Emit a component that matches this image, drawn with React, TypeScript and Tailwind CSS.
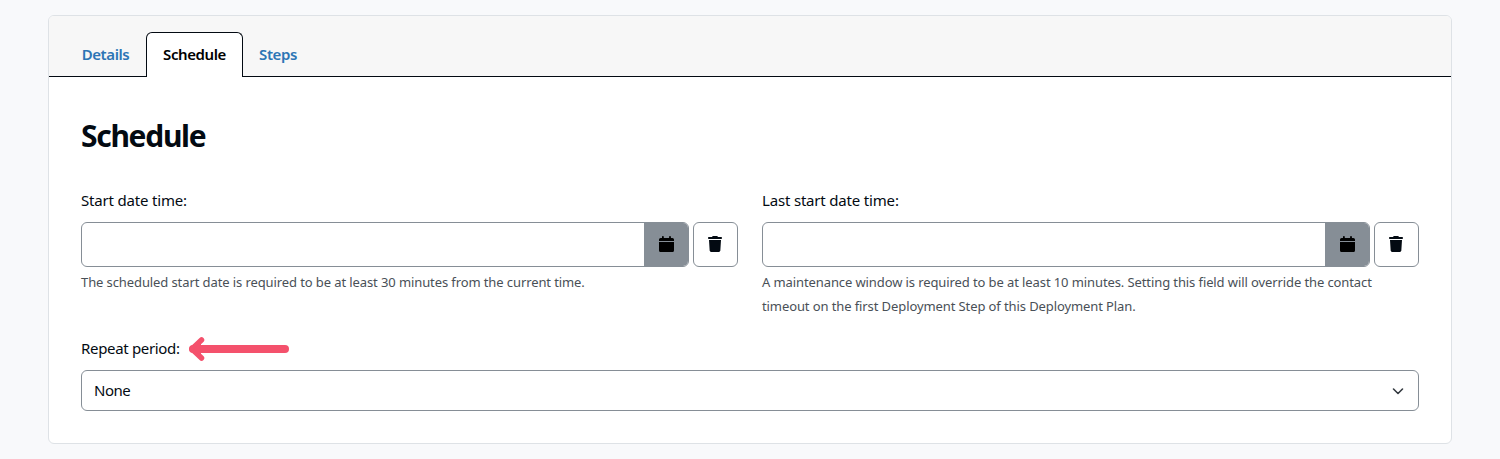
import type { ReactNode } from "react";

function CalendarIcon() {
  return (
    <svg className="h-4 w-[15px]" viewBox="0 0 15 16" fill="#000" aria-hidden="true">
      <path d="M0 5V3.600Q0 2 1.600 2H3V.8Q3 0 3.900 0t.9.8V2h5.300V.8Q10.100 0 11 0t.9.8V2h1.500Q15 2 15 3.600V5ZM0 6h15v8.400q0 1.600-1.600 1.600H1.600Q0 16 0 14.400Z" />
    </svg>
  );
}

function TrashIcon() {
  return (
    <svg className="h-4 w-3.5" viewBox="0 0 448 512" fill="#030a12" aria-hidden="true">
      <path d="M135.200 17.700 128 32H32C14.300 32 0 46.300 0 64s14.300 32 32 32h384c17.700 0 32-14.300 32-32s-14.300-32-32-32h-96l-7.200-14.300C307.400 6.800 296.300 0 284.200 0H163.800c-12.100 0-23.200 6.800-28.600 17.700zM416 128H32l21.200 339c1.600 25.300 22.600 45 47.900 45h245.800c25.300 0 46.300-19.700 47.900-45L416 128z" />
    </svg>
  );
}

function DateField({ label, children }: { label: string; children: ReactNode }) {
  return (
    <div className="min-w-0 flex-1">
      <div className="h-6 text-[15px] leading-6 tracking-[-0.18px]">{label}</div>
      <div className="mt-[10px] flex h-[45px] gap-1">
        <div className="flex flex-1 rounded-md border border-[#868e96] bg-white">
          <div className="flex-1" />
          <button className="flex w-11 items-center justify-center rounded-r-[5px] bg-[#868e96] pb-px" aria-label="Pick a date">
            <CalendarIcon />
          </button>
        </div>
        <button className="flex w-[45px] items-center justify-center rounded-md border border-[#868e96] bg-white pr-0.5 pb-px" aria-label="Clear">
          <TrashIcon />
        </button>
      </div>
      <p className="mt-[3px] text-[13px] leading-6 tracking-[-0.1px] text-[#495057]">{children}</p>
    </div>
  );
}

export default function App() {
  return (
    <div className="h-[459px] bg-[#f8f9fb] px-12 pt-[15px] font-['Noto_Sans',sans-serif] text-[#030a12]">
      <div className="h-[429px] w-[1404px] overflow-hidden rounded-md border border-[#dee2e6] bg-white">
        <div className="flex h-[61px] items-end border-b border-[#030a12] bg-[#f7f7f7] pl-4 text-[15px] font-semibold tracking-[-0.4px] text-[#2c75b5]">
          <div className="flex h-[44px] w-[81px] items-center justify-center">Details</div>
          <div className="-mb-px flex h-[45px] w-[97px] items-center justify-center rounded-t-md border border-b-0 border-[#030a12] bg-white pb-px text-black">
            Schedule
          </div>
          <div className="flex h-[44px] w-[70px] items-center justify-center">Steps</div>
        </div>
        <div className="px-8 pt-[39px]">
          <h1 className="h-10 text-[30px] leading-10 font-bold tracking-[-1.3px]">Schedule</h1>
          <div className="mt-8 flex gap-6">
            <DateField label="Start date time:">
              The scheduled start date is required to be at least 30 minutes from the current time.
            </DateField>
            <DateField label="Last start date time:">
              A maintenance window is required to be at least 10 minutes. Setting this field will override the contact
              <br />
              timeout on the first Deployment Step of this Deployment Plan.
            </DateField>
          </div>
          <div className="mt-[18px] flex h-6 items-center">
            <span className="w-[107px] text-[15px] leading-6 tracking-[-0.33px]">Repeat period:</span>
            <svg className="mt-0.5 h-6 w-[101px]" viewBox="0 0 101 24" fill="none" stroke="#f4516c" strokeLinecap="round" strokeLinejoin="round" aria-hidden="true">
              <path d="M5 12H97" strokeWidth="8" />
              <path d="M13.500 3 4 12l9.500 9" strokeWidth="5.500" />
              <path d="m5 12 8-7v14Z" fill="#f4516c" stroke="none" />
            </svg>
          </div>
          <div className="mt-[10px] flex h-[41px] items-center justify-between rounded-md border border-[#868e96] bg-white pr-3 pl-3 text-[15px] tracking-[-0.5px]">
            <span>None</span>
            <svg className="h-4 w-4" viewBox="0 0 16 16" fill="none" stroke="#343a40" strokeWidth="1.600" strokeLinecap="round" strokeLinejoin="round" aria-hidden="true">
              <path d="m3.500 6 4.500 4.500L12.500 6" />
            </svg>
          </div>
        </div>
      </div>
    </div>
  );
}
